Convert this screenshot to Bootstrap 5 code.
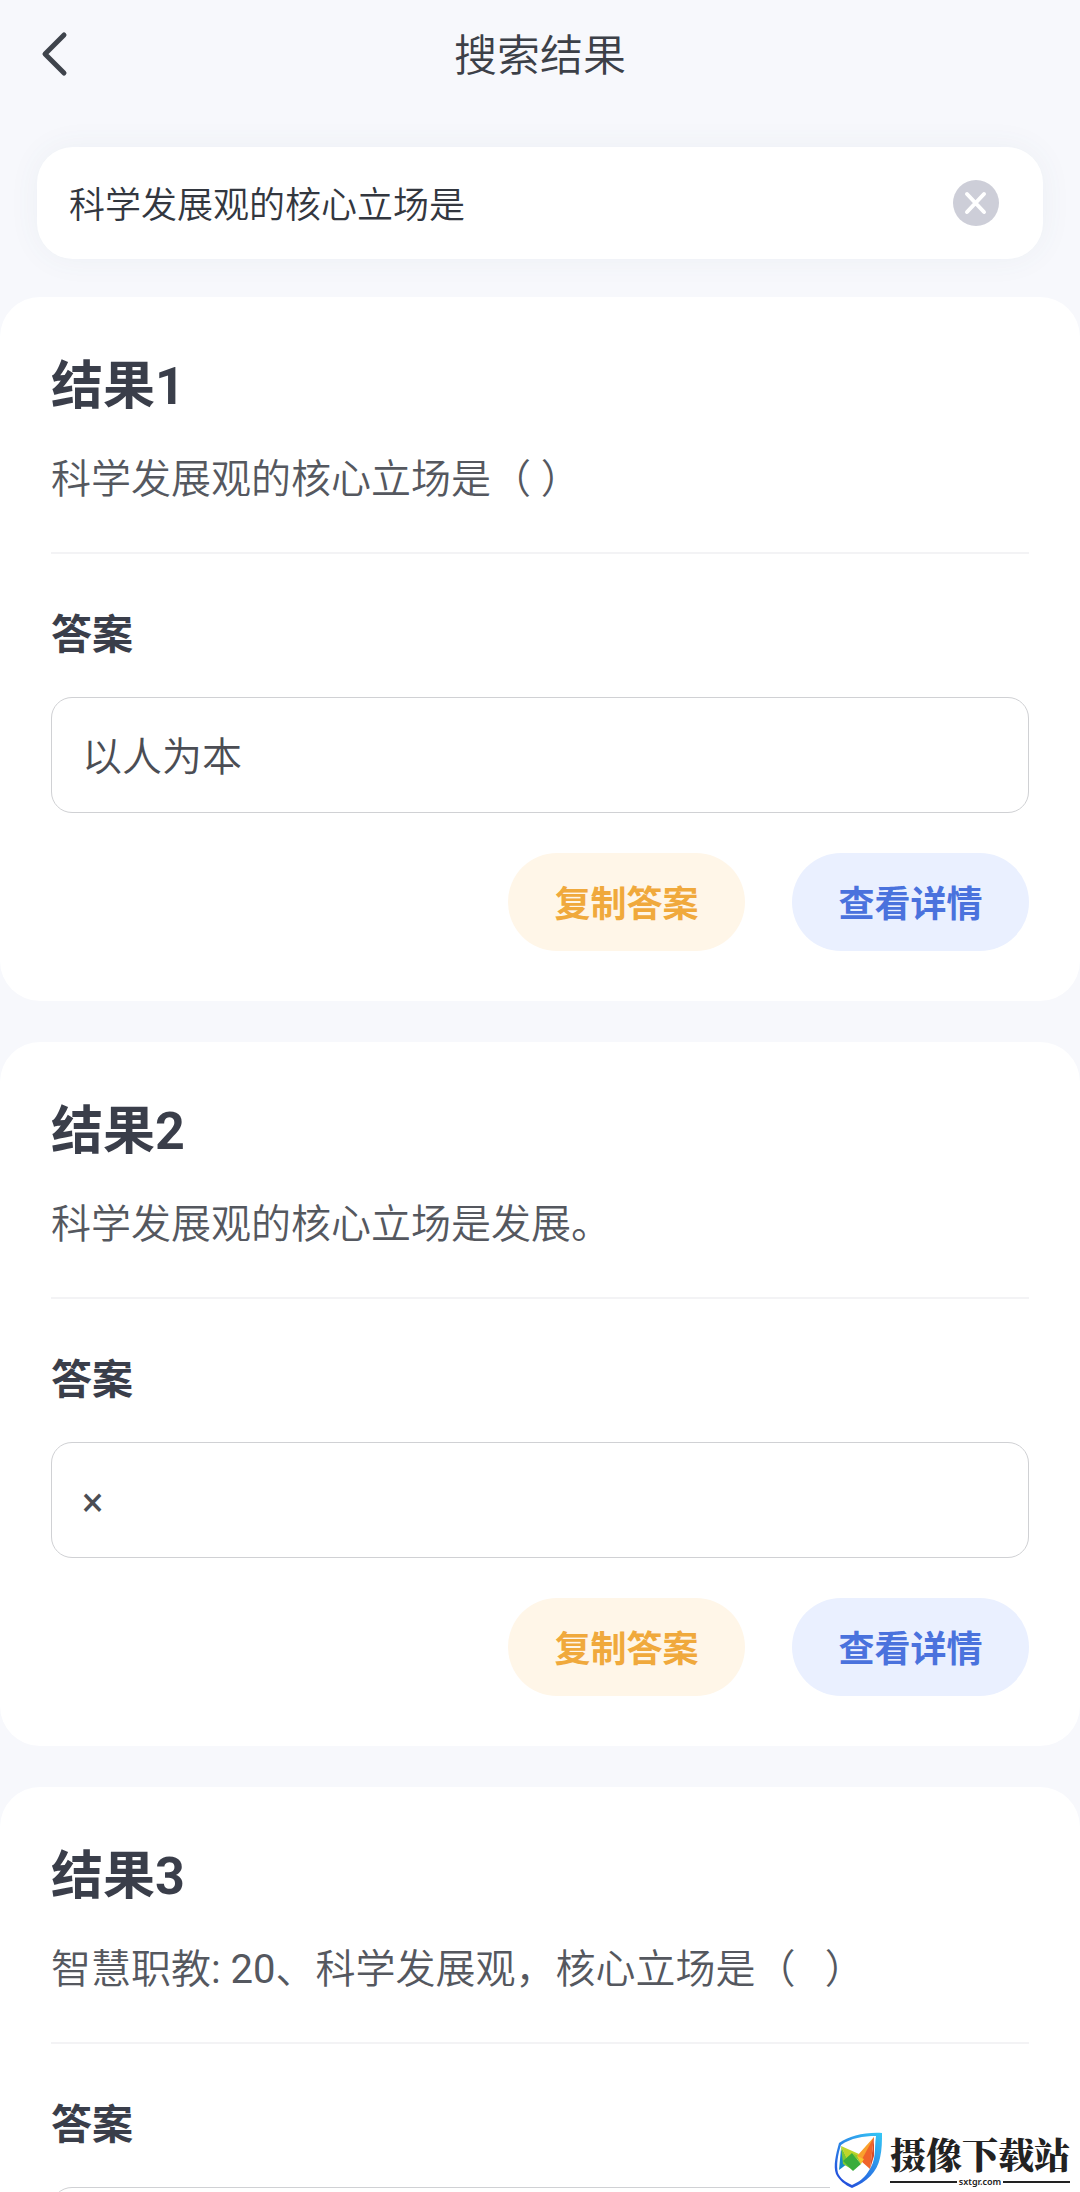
<!DOCTYPE html>
<html lang="zh-CN">
<head>
<meta charset="utf-8">
<meta name="viewport" content="width=device-width, initial-scale=1">
<title>搜索结果</title>
<link href="https://cdn.jsdelivr.net/npm/bootstrap@5.3.0/dist/css/bootstrap.min.css" rel="stylesheet">
<style>
  body { background: #f7f8fc; color: #55585f; font-family: Roboto, "Noto Sans CJK SC", sans-serif; font-size: 40px; font-weight: 350; line-height: 56px; }
  .top-bar { height: 108px; padding: 0 36px; }
  .top-bar h1 { font-size: 43px; font-weight: 350; line-height: 56px; padding-top: 4px; color: #3c4048; }
  .side-slot { width: 48px; }
  .plain-btn { border: 0; padding: 0; background: none; line-height: 0; }
  .search-box { margin: 39px 37px 38px; height: 112px; padding: 0 44px 0 32px; border-radius: 36px; background: #fff; box-shadow: 0 0 32px rgba(60, 100, 120, .06); }
  .search-box input, .search-box input:focus { border: 0; padding: 6px 0 0; background: none; box-shadow: none; color: #33373f; font-size: 36px; font-weight: 350; line-height: 56px; }
  .results { gap: 41px; overflow-y: auto; scrollbar-width: none; }
  .results::-webkit-scrollbar { display: none; }
  .result { border: 0; border-radius: 40px; padding: 54px 51px 50px; flex-shrink: 0; color: inherit; background: #fff; }
  .result h2 { font-size: 52px; font-weight: 700; line-height: 72px; margin-bottom: 29px; color: #3a3e4a; }
  .question { padding-bottom: 44px; margin-bottom: 53px; border-bottom: 2px solid #f3f3f5; }
  .result h3 { font-size: 41px; font-weight: 700; line-height: 56px; margin-bottom: 34px; color: #3a3e4a; }
  .answer { border: 1px solid #d0d1d4; border-radius: 21px; padding: 32px 30px 26px; margin-bottom: 40px; color: #4b4d54; }
  .actions { gap: 47px; }
  .pill { width: 237px; height: 98px; font-size: 36px; font-weight: 700; line-height: 56px; padding: 5px 0 0; border: 0; }
  .pill-copy, .pill-copy:hover { background: #fff6e8; color: #f0a93c; }
  .pill-view, .pill-view:hover { background: #eaf0ff; color: #4a72dd; }
  .site-tag { right: 0; bottom: 0; background: #fff; padding: 18px 10px 4px 3px; gap: 7px; color: #222; }
  .site-name { font-family: "Noto Serif CJK SC", "Noto Sans CJK SC", serif; font-size: 36px; font-weight: 900; line-height: 44px; }
  .site-url { font-family: "Noto Sans", sans-serif; font-size: 9px; font-weight: 600; line-height: 12px; gap: 2px; }
  .site-url i { flex: 1; height: 2px; background: #222; }
</style>
</head>
<body>
<div class="vh-100 d-flex flex-column overflow-hidden">
  <header class="top-bar d-flex align-items-center flex-shrink-0">
    <div class="side-slot d-flex">
      <button type="button" class="plain-btn" aria-label="返回">
        <svg width="36" height="48" viewBox="0 0 36 48" fill="none" stroke="#3f444c" stroke-width="5" stroke-linecap="round" stroke-linejoin="round"><path d="M28 5 9 24 28 43"/></svg>
      </button>
    </div>
    <h1 class="flex-grow-1 text-center mb-0">搜索结果</h1>
    <div class="side-slot"></div>
  </header>

  <form class="search-box d-flex align-items-center flex-shrink-0">
    <input type="text" class="form-control" aria-label="搜索" value="科学发展观的核心立场是">
    <button type="button" class="plain-btn" aria-label="清除">
      <svg width="46" height="46" viewBox="0 0 46 46"><circle cx="23" cy="23" r="23" fill="#cdced8"/><path d="M14 14 31 32M31 14 14 32" stroke="#fff" stroke-width="4" stroke-linecap="round"/></svg>
    </button>
  </form>

  <main class="results d-flex flex-column flex-grow-1">
    <article class="card result">
      <h2>结果1</h2>
      <div class="question">科学发展观的核心立场是（ ）</div>
      <h3>答案</h3>
      <div class="answer">以人为本</div>
      <div class="actions d-flex justify-content-end">
        <button type="button" class="btn rounded-pill pill pill-copy">复制答案</button>
        <button type="button" class="btn rounded-pill pill pill-view">查看详情</button>
      </div>
    </article>
    <article class="card result">
      <h2>结果2</h2>
      <div class="question">科学发展观的核心立场是发展。</div>
      <h3>答案</h3>
      <div class="answer fw-normal">×</div>
      <div class="actions d-flex justify-content-end">
        <button type="button" class="btn rounded-pill pill pill-copy">复制答案</button>
        <button type="button" class="btn rounded-pill pill pill-view">查看详情</button>
      </div>
    </article>
    <article class="card result">
      <h2>结果3</h2>
      <div class="question">智慧职教<span class="fw-normal">: 20</span>、科学发展观，核心立场是（&nbsp;&nbsp;&nbsp;）</div>
      <h3>答案</h3>
      <div class="answer">&nbsp;</div>
    </article>
  </main>
</div>

<aside class="site-tag position-fixed d-flex align-items-center">
  <svg width="50" height="56" viewBox="0 0 50 56">
    <defs>
      <linearGradient id="rim" x1="1" y1="0" x2="0.300" y2="1"><stop offset="0" stop-color="#35c8f5"/><stop offset="1" stop-color="#2450dc"/></linearGradient>
    </defs>
    <path fill="url(#rim)" fill-rule="evenodd" d="M49 1C32 0 16 4 6 11 3 22 0 34 3 42 6 48 12 53 19 56 34 50 44 40 47 26 49 17 49 9 49 1ZM43 4C41 18 44 28 35 40 31 46 26 50 19 53 12 50 7 46 5 41 3 33 5 22 8 13 18 6 30 4 43 4Z"/>
    <path d="M8 17 6 38 14 32Z" fill="#1689c8"/>
    <path d="M8 14 20 38 10 32Z" fill="#7fc832"/>
    <path d="M8 14 26 22 19 38Z" fill="#bfd52b"/>
    <path d="M10 29 19 21 28 32 20 39Z" fill="#39ad3b"/>
    <path d="M19 21 28 25 28 32Z" fill="#8fcb2c"/>
    <path d="M41 5 24 24 33 30Z" fill="#f9a12d"/>
    <path d="M41 5 28 29 37 37Z" fill="#f0642a"/>
    <path d="M41 5 41 24 37 37Z" fill="#d94a25"/>
    <path d="M24 24 31 27 28 32Z" fill="#f6c62d"/>
  </svg>
  <div>
    <div class="site-name">摄像下载站</div>
    <div class="site-url d-flex align-items-center"><i></i>sxtgr.com<i></i></div>
  </div>
</aside>
<script src="https://cdn.jsdelivr.net/npm/bootstrap@5.3.0/dist/js/bootstrap.bundle.min.js"></script>
</body>
</html>
